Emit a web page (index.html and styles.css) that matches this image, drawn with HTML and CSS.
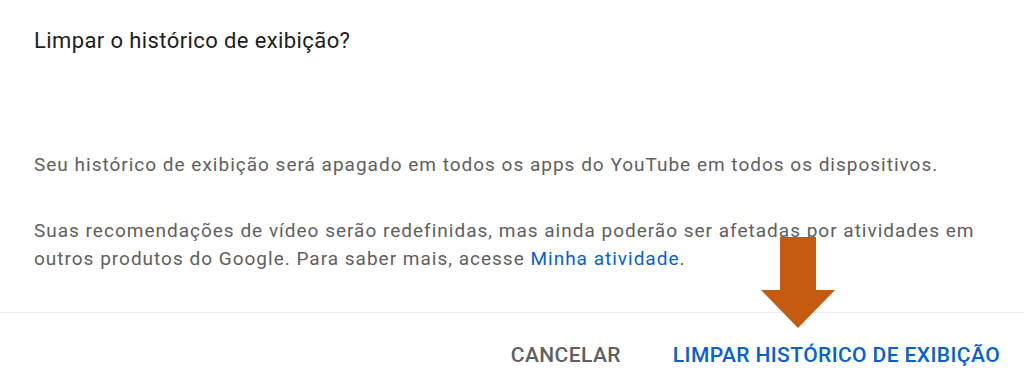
FILE: index.html
```html
<!DOCTYPE html>
<html lang="pt-BR">
<head>
    <meta charset="UTF-8">
    <meta name="viewport" content="width=device-width, initial-scale=1.0">
    <title>Limpar o histórico de exibição</title>
    <link rel="stylesheet" href="styles.css">
</head>
<body>
    <div class="dialog">
        <h1 class="dialog-title">Limpar o histórico de exibição?</h1>

        <div class="dialog-content">
            <p>Seu histórico de exibição será apagado em todos os apps do YouTube em todos os dispositivos.</p>
            <p>Suas recomendações de vídeo serão redefinidas, mas ainda poderão ser afetadas por atividades em outros produtos do Google. Para saber mais, acesse <a href="#">Minha atividade</a>.</p>
        </div>

        <div class="dialog-buttons">
            <button type="button" class="btn btn-cancel">Cancelar</button>
            <button type="button" class="btn btn-confirm">Limpar histórico de exibição</button>
        </div>

        <!-- seta de destaque -->
        <svg class="arrow" width="76" height="92" viewBox="0 0 76 92">
            <polygon points="19,0 55,0 55,53 74,53 37,91 0,53 19,53" fill="#c55a11"/>
        </svg>
    </div>
</body>
</html>
```

FILE: styles.css
```css
/* Estilos */
body {
    margin: 0;
    background: #fff;
    font-family: Roboto, "Noto Sans", Arial, sans-serif;
}
.dialog {
    position: relative;
    width: 1024px;
    height: 382px;
    overflow: hidden;
}
.dialog-title {
    margin: 0;
    padding: 28px 34px 0;
    font-size: 22px;
    font-weight: 400;
    line-height: 26px;
    letter-spacing: 0.4px;
    color: #212121;
}
.dialog-content {
    padding: 0 34px;
    margin-top: 97px;
    font-size: 19px;
    line-height: 28px;
    letter-spacing: 1px;
    color: #606060;
}
.dialog-content p {
    margin: 0 0 38px;
}
.dialog-content p:last-child {
    margin-bottom: 0;
}
.dialog-content a {
    color: #065fd4;
    text-decoration: none;
}
.dialog-buttons {
    display: flex;
    justify-content: flex-end;
    align-items: center;
    gap: 52px;
    margin-top: 39px;
    padding: 30px 24px 0 0;
    border-top: 1px solid #ececec;
}
.btn {
    background: none;
    border: none;
    padding: 0;
    font-family: inherit;
    font-size: 21px;
    font-weight: 500;
    line-height: 24px;
    letter-spacing: 0.4px;
    text-transform: uppercase;
    cursor: pointer;
}
.btn-cancel {
    color: #606060;
}
.btn-confirm {
    color: #065fd4;
}
.arrow {
    position: absolute;
    left: 761px;
    top: 237px;
}
```
